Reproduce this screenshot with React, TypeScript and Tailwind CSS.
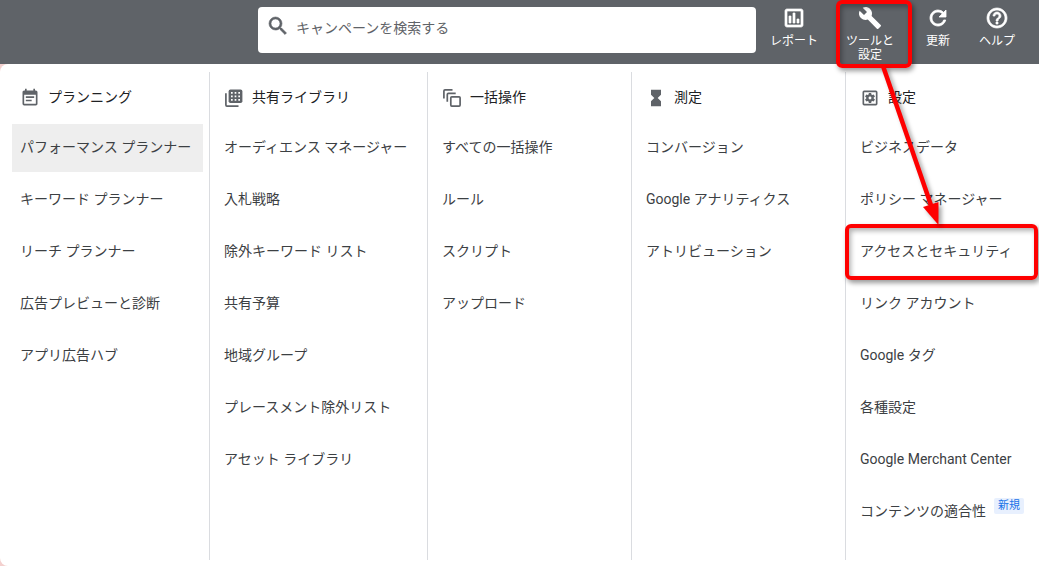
import type { ReactNode } from 'react'
import {
  MdBuild,
  MdEventNote,
  MdHelpOutline,
  MdHourglassFull,
  MdOutlineAssessment,
  MdOutlineSettingsApplications,
  MdRefresh,
  MdSearch,
} from 'react-icons/md'

interface MenuItem {
  label: string
  active?: boolean
  highlighted?: boolean
  badge?: string
}

interface MenuColumn {
  title: string
  icon: ReactNode
  items: MenuItem[]
}

function LibraryIcon() {
  return (
    <svg viewBox="0 0 20 20" className="size-5 shrink-0" fill="none" aria-hidden="true">
      <path d="M1.9 5.2v11.9q0 1 1 1h11.6" stroke="currentColor" strokeWidth="1.7" />
      <rect x="4.6" y="1.6" width="13.8" height="13.4" rx="1.8" fill="currentColor" />
      <path
        d="M7 4h1.7v1.7H7zM10.650 4h1.7v1.7h-1.7zM14.300 4h1.7v1.7h-1.7zM7 7.500h1.7v1.7H7zM10.650 7.500h1.7v1.7h-1.7zM14.300 7.500h1.7v1.7h-1.7zM7 11h1.7v1.7H7zM10.650 11h1.7v1.7h-1.7zM14.300 11h1.7v1.7h-1.7z"
        fill="#fff"
      />
    </svg>
  )
}

function BulkIcon() {
  return (
    <svg
      viewBox="0 0 20 20"
      className="size-5 shrink-0"
      fill="none"
      stroke="currentColor"
      strokeWidth="1.7"
      aria-hidden="true"
    >
      <path d="M1.9 10.500V3q0-1.100 1.100-1.100h7.500" />
      <path d="M5.300 13.700V6.400q0-1.100 1.100-1.100h7.300" />
      <rect x="8.800" y="8.800" width="9.300" height="9.300" rx="1" />
    </svg>
  )
}

const columns: MenuColumn[] = [
  {
    title: 'プランニング',
    icon: <MdEventNote className="size-5 shrink-0" />,
    items: [
      { label: 'パフォーマンス プランナー', active: true },
      { label: 'キーワード プランナー' },
      { label: 'リーチ プランナー' },
      { label: '広告プレビューと診断' },
      { label: 'アプリ広告ハブ' },
    ],
  },
  {
    title: '共有ライブラリ',
    icon: <LibraryIcon />,
    items: [
      { label: 'オーディエンス マネージャー' },
      { label: '入札戦略' },
      { label: '除外キーワード リスト' },
      { label: '共有予算' },
      { label: '地域グループ' },
      { label: 'プレースメント除外リスト' },
      { label: 'アセット ライブラリ' },
    ],
  },
  {
    title: '一括操作',
    icon: <BulkIcon />,
    items: [
      { label: 'すべての一括操作' },
      { label: 'ルール' },
      { label: 'スクリプト' },
      { label: 'アップロード' },
    ],
  },
  {
    title: '測定',
    icon: <MdHourglassFull className="size-5 shrink-0" />,
    items: [
      { label: 'コンバージョン' },
      { label: 'Google アナリティクス' },
      { label: 'アトリビューション' },
    ],
  },
  {
    title: '設定',
    icon: <MdOutlineSettingsApplications className="size-5 shrink-0" />,
    items: [
      { label: 'ビジネスデータ' },
      { label: 'ポリシー マネージャー' },
      { label: 'アクセスとセキュリティ', highlighted: true },
      { label: 'リンク アカウント' },
      { label: 'Google タグ' },
      { label: '各種設定' },
      { label: 'Google Merchant Center' },
      { label: 'コンテンツの適合性', badge: '新規' },
    ],
  },
]

const toolButton = 'relative flex flex-col items-center pt-1.5 text-xs leading-[14px] text-white'

// The material icons carry an empty bounding path that must stay unstroked
const boldIcon = 'size-6 shrink-0 [&>[fill=none]]:stroke-none'

function Header() {
  return (
    <header className="flex h-16 bg-[#5f6368] pr-[15px] pl-[258px]">
      <div className="mt-[7px] mr-0.5 flex h-[46px] min-w-0 flex-1 items-start gap-1.5 rounded-sm bg-white pt-[7px] pr-3 pl-2">
        <MdSearch className={`${boldIcon} text-[#5f6368]`} strokeWidth={0.6} />
        <input
          type="text"
          aria-label="キャンペーンを検索する"
          placeholder="キャンペーンを検索する"
          className="h-7 min-w-0 flex-1 bg-transparent text-sm outline-none placeholder:text-[#5f6368]"
        />
      </div>
      <nav className="flex shrink-0 gap-1">
        <button type="button" className={`${toolButton} w-[72px]`}>
          <MdOutlineAssessment className={boldIcon} strokeWidth={0.7} />
          <span className="mt-1">レポート</span>
        </button>
        <button type="button" className={`${toolButton} w-[72px]`}>
          <MdBuild className={boldIcon} />
          <span className="mt-1">
            ツールと
            <br />
            設定
          </span>
          <span className="absolute top-0 -right-1.5 -bottom-1 left-0.5 z-10 rounded-md border-4 border-[#fe0000] shadow-[2px_3px_5px_rgba(0,0,0,0.4),inset_2px_3px_5px_rgba(0,0,0,0.3)]" />
        </button>
        <button type="button" className={`${toolButton} w-14`}>
          <MdRefresh className={boldIcon} strokeWidth={0.8} />
          <span className="mt-1">更新</span>
        </button>
        <button type="button" className={`${toolButton} w-[54px]`}>
          <MdHelpOutline className={boldIcon} strokeWidth={0.7} />
          <span className="mt-1">ヘルプ</span>
        </button>
      </nav>
    </header>
  )
}

// Arrow from the tools button down to the highlighted item
function Arrow() {
  return (
    <svg
      viewBox="0 0 70 166"
      className="pointer-events-none absolute -top-1.5 right-[89px] z-10 h-[166px] w-[70px] drop-shadow-[3px_3px_2px_rgba(0,0,0,0.35)]"
      aria-hidden="true"
    >
      <path d="M3 0 52 142" stroke="#fe0000" strokeWidth="4.500" />
      <path d="M43 141 58.500 136v23z" fill="#fe0000" />
    </svg>
  )
}

function Column({ column, last }: { column: MenuColumn; last: boolean }) {
  return (
    <section className="relative border-r border-[#dadce0] px-1.5 pb-6 first:pl-3 last:border-r-0">
      <h2 className="mb-1 flex h-12 items-center gap-2 px-2 pt-0.5 text-sm text-[#202124]">
        <span className="pt-0.5 text-[#5f6368]">{column.icon}</span>
        <span>{column.title}</span>
      </h2>
      <ul className="flex flex-col gap-1">
        {column.items.map((item) => (
          <li key={item.label} className="relative">
            <a
              href="#"
              className={`flex h-12 items-center gap-2 px-2 pb-0.5 text-sm whitespace-nowrap text-[#3c4043] ${
                item.active ? 'bg-[#eeeeee]' : ''
              }`}
            >
              {item.label}
              {item.badge && (
                <span className="mb-2.5 rounded-xs bg-[#e8f0fe] px-1 text-[11px] leading-4 text-[#1a73e8]">
                  {item.badge}
                </span>
              )}
            </a>
            {item.highlighted && (
              <span className="pointer-events-none absolute -inset-y-1 -right-[5px] -left-[7px] z-10 rounded-md border-4 border-[#fe0000] shadow-[2px_3px_5px_rgba(0,0,0,0.4),inset_2px_3px_5px_rgba(0,0,0,0.3)]" />
            )}
          </li>
        ))}
      </ul>
      {last && <Arrow />}
    </section>
  )
}

function App() {
  return (
    <div className="overflow-hidden bg-[#f3d0ce] font-['Roboto','Noto_Sans_CJK_JP',sans-serif]" lang="ja">
      <Header />
      <main className="grid grid-cols-[210fr_218fr_204fr_214fr_193fr] rounded-l-lg bg-white pt-2 pb-1.5">
        {columns.map((column, index) => (
          <Column key={column.title} column={column} last={index === columns.length - 1} />
        ))}
      </main>
    </div>
  )
}

export default App
